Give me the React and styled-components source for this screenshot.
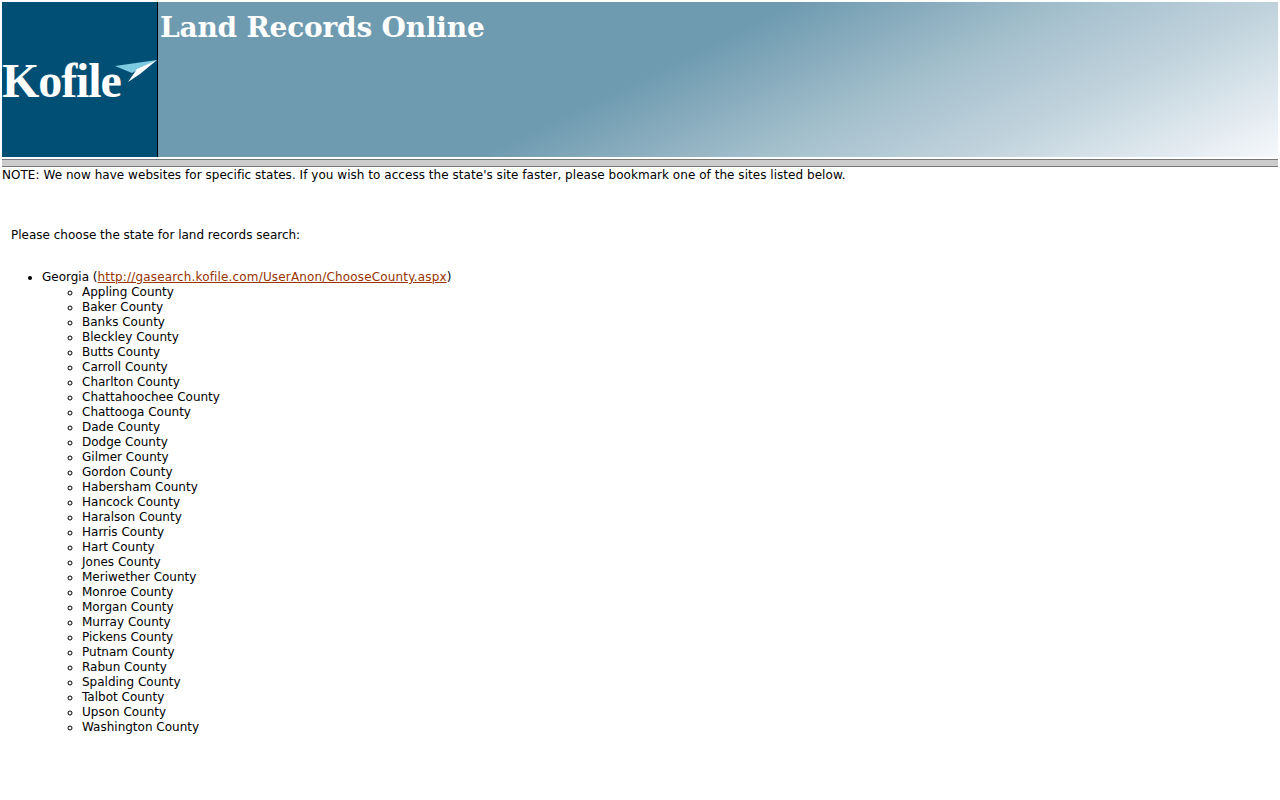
import React from "react";
import styled, { createGlobalStyle } from "styled-components";

const Global = createGlobalStyle`
  html, body { margin: 0; padding: 0; background: #fff; }
  body { padding: 2px; font-family: "DejaVu Sans", Verdana, sans-serif; font-size: 12px; color: #000; line-height: 15px; }
`;
const Header = styled.header`
  display: flex;
  height: 155px;
  background: linear-gradient(154deg, #6f9bb0 0%, #6f9bb0 50%, #a5c0cd 68%, #bfd2dc 80%, #f6f8fb 100%);
`;
const LogoBox = styled.div`
  width: 155px;
  flex: none;
  background: #024f75;
  border-right: 1px solid #000;
  display: flex;
  align-items: flex-end;
  position: relative;
  padding-bottom: 54px;
  height: 101px;
`;
const LogoText = styled.span`
  font-family: "Liberation Serif", serif;
  font-weight: 700;
  font-size: 48px;
  line-height: 44px;
  color: #fff;
  letter-spacing: -1.1px;
`;
const LogoMark = styled.svg`
  position: absolute;
  left: 112px;
  top: 58px;
`;
const Title = styled.h1`
  margin: 9px 0 0 2px;
  font-family: "DejaVu Serif", Georgia, serif;
  font-size: 28px;
  line-height: 34px;
  font-weight: 700;
  letter-spacing: -0.2px;
  color: #fff;
`;
const Rule = styled.div`
  height: 6px;
  margin-top: 2px;
  background: #ccc;
  border-top: 1px solid #777;
  border-bottom: 1px solid #777;
`;
const Note = styled.p`
  margin: 0;
  letter-spacing: 0.04px;
  padding-top: 1px;
`;
const Prompt = styled.p`
  margin: 45px 0 0 9px;
`;
const StateList = styled.ul`
  margin: 27px 0 0;
  padding-left: 40px;
  list-style: disc;
`;
const CountyList = styled.ul`
  margin: 0;
  padding-left: 40px;
  list-style: circle;
`;
const StateLink = styled.a`
  color: #993300;
  letter-spacing: 0.16px;
`;

const counties = ["Appling","Baker","Banks","Bleckley","Butts","Carroll","Charlton","Chattahoochee","Chattooga","Dade","Dodge","Gilmer","Gordon","Habersham","Hancock","Haralson","Harris","Hart","Jones","Meriwether","Monroe","Morgan","Murray","Pickens","Putnam","Rabun","Spalding","Talbot","Upson","Washington"];

export default function App() {
  return (
    <>
      <Global />
      <Header>
        <LogoBox>
          <LogoText>Kofile</LogoText>
          <LogoMark width="44" height="24" viewBox="0 0 44 24">
            <path d="M1 6 L43 0 L18 13 Z" fill="#7ccbe0" />
            <path d="M43 0 L23 9 L14 22 L26 14 Z" fill="#fff" />
          </LogoMark>
        </LogoBox>
        <Title>Land Records Online</Title>
      </Header>
      <Rule />
      <Note>NOTE: We now have websites for specific states. If you wish to access the state's site faster, please bookmark one of the sites listed below.</Note>
      <Prompt>Please choose the state for land records search:</Prompt>
      <StateList>
        <li>
          Georgia (<StateLink href="#">http://gasearch.kofile.com/UserAnon/ChooseCounty.aspx</StateLink>)
          <CountyList>
            {counties.map((c) => <li key={c}>{c} County</li>)}
          </CountyList>
        </li>
      </StateList>
    </>
  );
}
